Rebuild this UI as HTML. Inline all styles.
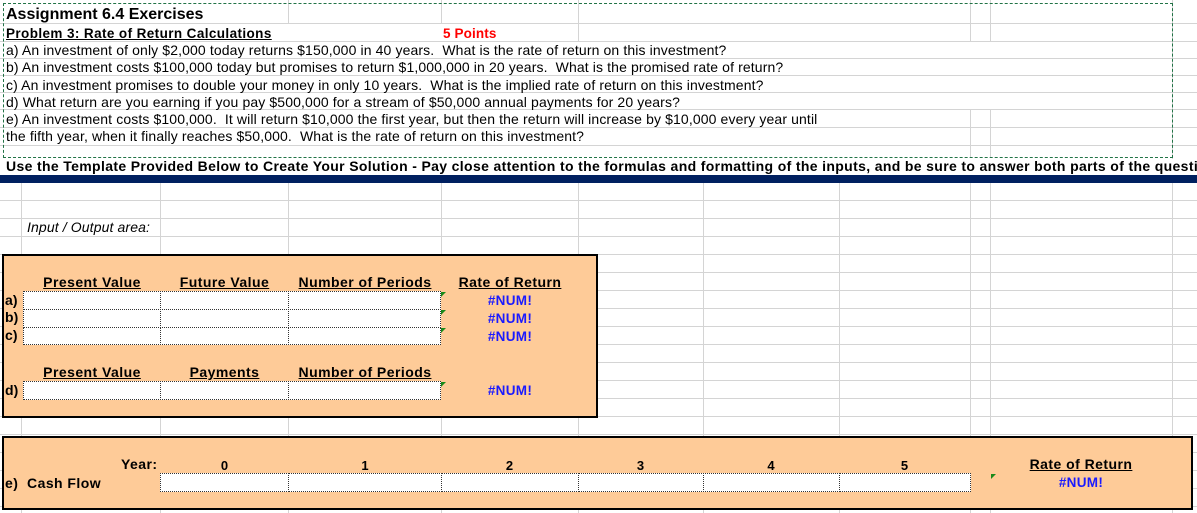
<!DOCTYPE html>
<html><head><meta charset="utf-8"><style>
*{margin:0;padding:0;box-sizing:border-box}
body{width:1197px;height:513px;overflow:hidden;background:#fff;font-family:"Liberation Sans",Arial,sans-serif;position:relative;color:#000}
.h{position:absolute;height:1px;background:#d4d4d4}
.v{position:absolute;width:1px;background:#d4d4d4}
.t{position:absolute;white-space:nowrap;font-size:14px;line-height:15px;letter-spacing:0.12px}
.b{font-weight:bold}
.u{text-decoration:underline}
.hd{letter-spacing:0.45px}
.box{position:absolute;background:#fecb98;border:2px solid #000}
.in{position:absolute;background:#fff;border:1px dotted #333}
.num{position:absolute;color:#1a1aff;font-weight:bold;font-size:13.5px;letter-spacing:0.3px;text-align:center}
.tri{position:absolute;width:0;height:0;border-top:5px solid #1a8a1a;border-right:5px solid transparent}
.c{text-align:center}
</style></head><body>
<div class="h" style="left:0;top:23px;width:1197px"></div>
<div class="h" style="left:0;top:41px;width:1197px"></div>
<div class="h" style="left:0;top:58px;width:1197px"></div>
<div class="h" style="left:0;top:75px;width:1197px"></div>
<div class="h" style="left:0;top:92px;width:1197px"></div>
<div class="h" style="left:0;top:109px;width:1197px"></div>
<div class="h" style="left:0;top:127px;width:1197px"></div>
<div class="h" style="left:0;top:145px;width:1197px"></div>
<div class="v" style="left:288px;top:0;height:23px"></div>
<div class="v" style="left:441px;top:0;height:23px"></div>
<div class="v" style="left:578px;top:0;height:41px"></div>
<div class="v" style="left:970px;top:0;height:41px"></div>
<div class="v" style="left:990px;top:0;height:41px"></div>
<div class="v" style="left:970px;top:109px;height:48px"></div>
<div class="v" style="left:990px;top:109px;height:48px"></div>
<div class="v" style="left:1172px;top:0;height:175px"></div>
<div style="position:absolute;left:0;top:183px;width:1197px;height:330px;background-image:repeating-linear-gradient(to bottom,transparent 0,transparent 17px,#d4d4d4 17px,#d4d4d4 18px)"></div>
<div class="v" style="left:21px;top:183px;height:330px"></div>
<div class="v" style="left:160px;top:183px;height:330px"></div>
<div class="v" style="left:288px;top:183px;height:330px"></div>
<div class="v" style="left:441px;top:183px;height:330px"></div>
<div class="v" style="left:578px;top:183px;height:330px"></div>
<div class="v" style="left:703px;top:183px;height:330px"></div>
<div class="v" style="left:839px;top:183px;height:330px"></div>
<div class="v" style="left:970px;top:183px;height:330px"></div>
<div class="v" style="left:990px;top:183px;height:330px"></div>
<div class="v" style="left:1172px;top:183px;height:330px"></div>
<div style="position:absolute;left:3px;top:3px;width:1170px;height:155px;border:1.5px dashed #217346"></div>
<div class="t b" style="left:6px;top:6px;font-size:16px;line-height:17px;letter-spacing:0">Assignment 6.4 Exercises</div>
<div class="t b u" style="left:6px;top:26px;font-size:13.5px;letter-spacing:0.4px">Problem 3: Rate of Return Calculations</div>
<div class="t b" style="left:443px;top:26px;color:#f00;font-size:13.5px">5 Points</div>
<div class="t" style="left:6px;top:43px">a) An investment of only $2,000 today returns $150,000 in 40 years.&nbsp; What is the rate of return on this investment?</div>
<div class="t" style="left:6px;top:60px">b) An investment costs $100,000 today but promises to return $1,000,000 in 20 years.&nbsp; What is the promised rate of return?</div>
<div class="t" style="left:6px;top:78px">c) An investment promises to double your money in only 10 years.&nbsp; What is the implied rate of return on this investment?</div>
<div class="t" style="left:6px;top:95px">d) What return are you earning if you pay $500,000 for a stream of $50,000 annual payments for 20 years?</div>
<div class="t" style="left:6px;top:112px">e) An investment costs $100,000.&nbsp; It will return $10,000 the first year, but then the return will increase by $10,000 every year until</div>
<div class="t" style="left:6px;top:129px">the fifth year, when it finally reaches $50,000.&nbsp; What is the rate of return on this investment?</div>
<div style="position:absolute;left:0;top:159px;width:1197px;height:16px;background:#fff"></div>
<div class="t b" style="left:6px;top:159px;font-size:14px;letter-spacing:0.35px">Use the Template Provided Below to Create Your Solution - Pay close attention to the formulas and formatting of the inputs, and be sure to answer both parts of the question</div>
<div style="position:absolute;left:0;top:175px;width:1197px;height:8px;background:#002060"></div>
<div class="t" style="left:27px;top:220px;font-style:italic">Input / Output area:</div>
<div class="box" style="left:2px;top:254px;width:596px;height:164px"></div>
<div class="t b u c hd" style="left:24px;top:275px;width:136px">Present Value</div>
<div class="t b u c hd" style="left:161px;top:275px;width:127px">Future Value</div>
<div class="t b u c hd" style="left:289px;top:275px;width:152px">Number of Periods</div>
<div class="t b u c hd" style="left:442px;top:275px;width:136px">Rate of Return</div>
<div class="t b" style="left:5px;top:293px">a)</div>
<div class="t b" style="left:5px;top:310px">b)</div>
<div class="t b" style="left:5px;top:328px">c)</div>
<div class="in" style="left:23px;top:291px;width:138px;height:19px"></div>
<div class="in" style="left:160px;top:291px;width:129px;height:19px"></div>
<div class="in" style="left:288px;top:291px;width:153px;height:19px"></div>
<div class="in" style="left:23px;top:309px;width:138px;height:19px"></div>
<div class="in" style="left:160px;top:309px;width:129px;height:19px"></div>
<div class="in" style="left:288px;top:309px;width:153px;height:19px"></div>
<div class="in" style="left:23px;top:327px;width:138px;height:18px"></div>
<div class="in" style="left:160px;top:327px;width:129px;height:18px"></div>
<div class="in" style="left:288px;top:327px;width:153px;height:18px"></div>
<div class="tri" style="left:441px;top:292px"></div>
<div class="tri" style="left:441px;top:310px"></div>
<div class="tri" style="left:441px;top:328px"></div>
<div class="num" style="left:442px;top:293px;width:136px">#NUM!</div>
<div class="num" style="left:442px;top:311px;width:136px">#NUM!</div>
<div class="num" style="left:442px;top:329px;width:136px">#NUM!</div>
<div class="t b u c hd" style="left:24px;top:365px;width:136px">Present Value</div>
<div class="t b u c hd" style="left:161px;top:365px;width:127px">Payments</div>
<div class="t b u c hd" style="left:289px;top:365px;width:152px">Number of Periods</div>
<div class="t b" style="left:5px;top:383px">d)</div>
<div class="in" style="left:23px;top:381px;width:138px;height:19px"></div>
<div class="in" style="left:160px;top:381px;width:129px;height:19px"></div>
<div class="in" style="left:288px;top:381px;width:153px;height:19px"></div>
<div class="tri" style="left:441px;top:382px"></div>
<div class="num" style="left:442px;top:383px;width:136px">#NUM!</div>
<div class="box" style="left:2px;top:436px;width:1191px;height:74px"></div>
<div class="t b hd" style="left:121px;top:457px">Year:</div>
<div class="t b c" style="left:160px;top:458px;width:129px;font-size:13px">0</div>
<div class="t b c" style="left:289px;top:458px;width:152px;font-size:13px">1</div>
<div class="t b c" style="left:441px;top:458px;width:137px;font-size:13px">2</div>
<div class="t b c" style="left:578px;top:458px;width:125px;font-size:13px">3</div>
<div class="t b c" style="left:703px;top:458px;width:136px;font-size:13px">4</div>
<div class="t b c" style="left:839px;top:458px;width:131px;font-size:13px">5</div>
<div class="t b u c hd" style="left:990px;top:457px;width:182px">Rate of Return</div>
<div class="t b hd" style="left:5px;top:476px">e)&nbsp; Cash Flow</div>
<div class="in" style="left:160px;top:473px;width:129px;height:19px"></div>
<div class="in" style="left:288px;top:473px;width:154px;height:19px"></div>
<div class="in" style="left:441px;top:473px;width:138px;height:19px"></div>
<div class="in" style="left:578px;top:473px;width:126px;height:19px"></div>
<div class="in" style="left:703px;top:473px;width:137px;height:19px"></div>
<div class="in" style="left:839px;top:473px;width:132px;height:19px"></div>
<div class="tri" style="left:991px;top:474px"></div>
<div class="num" style="left:990px;top:475px;width:182px">#NUM!</div>
</body></html>
